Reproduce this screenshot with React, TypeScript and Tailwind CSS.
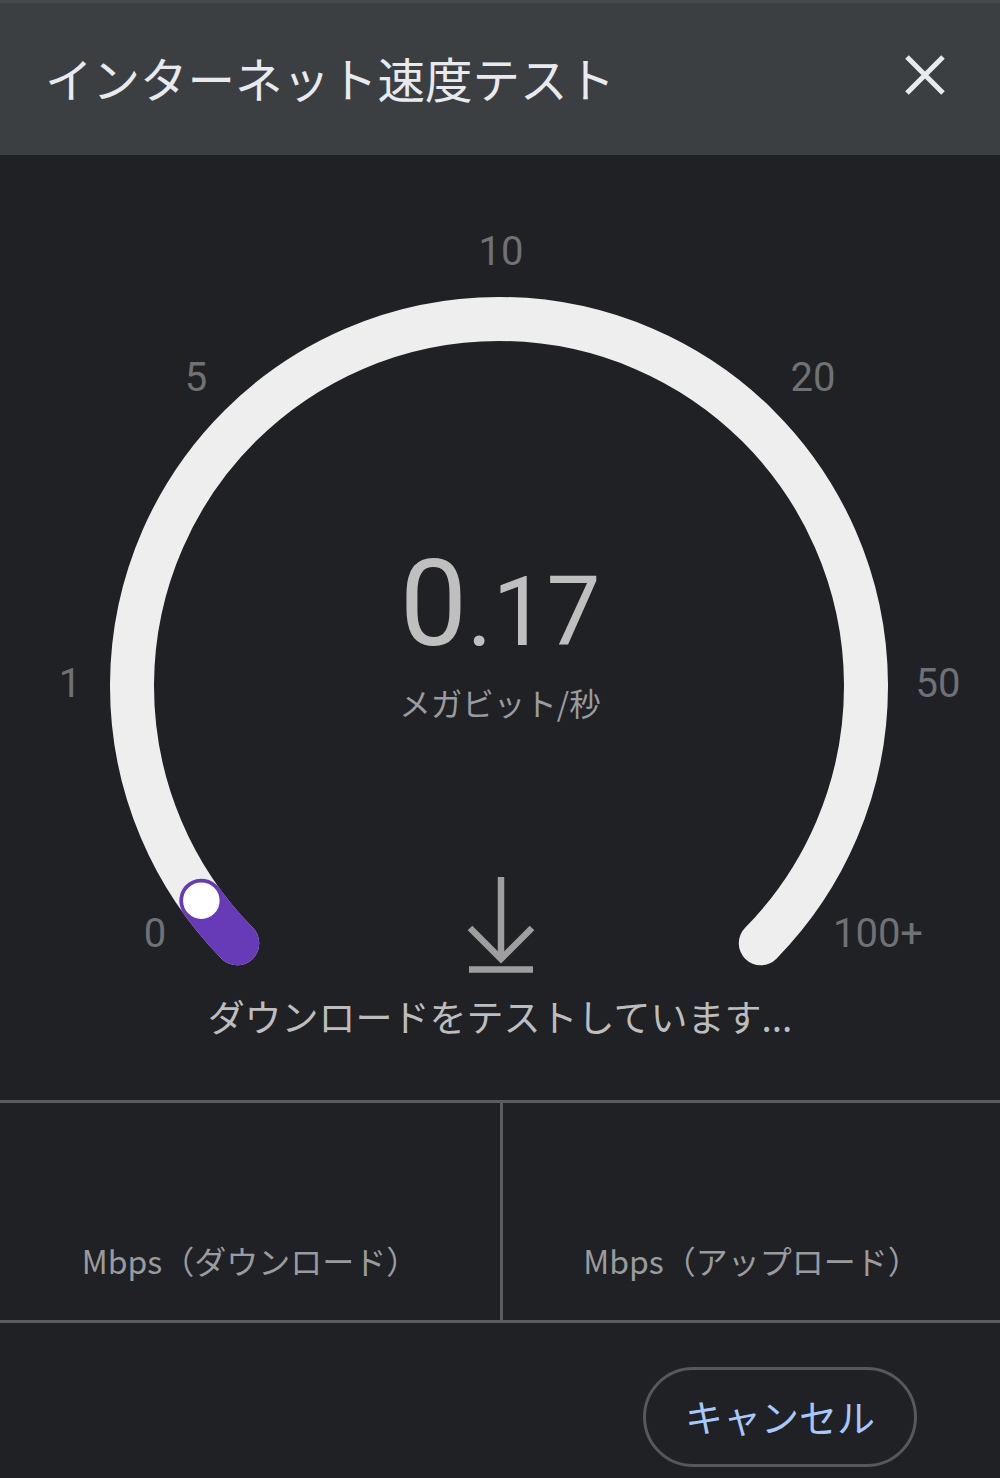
const jp = "font-['Noto_Sans_CJK_JP','Noto_Sans',sans-serif]";
const num = "font-['Roboto','Noto_Sans_CJK_JP',sans-serif]";

// gauge geometry (svg coords, gauge area starts at y=155 of page)
const CX = 499;
const CY = 531;
const R = 367;

function pt(deg: number) {
  const a = (deg * Math.PI) / 180;
  return { x: CX + R * Math.sin(a), y: CY - R * Math.cos(a) };
}

const START = -134.5;
const END = 134.5;
const VALUE = -125.8;

function Gauge() {
  const s = pt(START);
  const e = pt(END);
  const v = pt(VALUE);

  return (
    <svg viewBox="0 0 1000 945" className="absolute inset-0 h-full w-full">
      <path
        d={`M ${s.x} ${s.y} A ${R} ${R} 0 1 1 ${e.x} ${e.y}`}
        fill="none"
        stroke="#eeeeee"
        strokeWidth={44}
        strokeLinecap="round"
      />
      <path
        d={`M ${s.x} ${s.y} A ${R} ${R} 0 0 1 ${v.x} ${v.y}`}
        fill="none"
        stroke="#673ab7"
        strokeWidth={44}
        strokeLinecap="round"
      />
      <circle cx={v.x} cy={v.y} r={19.5} fill="#ffffff" stroke="#673ab7" strokeWidth={2.5} />

      {/* download arrow */}
      <g stroke="#9e9e9e" strokeWidth={6.5} fill="none">
        <line x1={501} y1={722} x2={501} y2={802} />
        <polyline points="470,773 501,804 532,773" />
        <line x1={469} y1={814.5} x2={533} y2={814.5} />
      </g>
    </svg>
  );
}

const ticks = [
  { label: "10", cls: "left-[501px] top-[97px]" },
  { label: "5", cls: "left-[196px] top-[223px]" },
  { label: "20", cls: "left-[813px] top-[223px]" },
  { label: "1", cls: "left-[70px] top-[529px]" },
  { label: "50", cls: "left-[938px] top-[529px]" },
  { label: "0", cls: "left-[155px] top-[779px]" },
  { label: "100+", cls: "left-[878px] top-[779px]" },
];

export default function App() {
  return (
    <div className={`flex h-[1478px] w-[1000px] flex-col overflow-hidden bg-[#202124] ${jp}`}>
      <header className="flex h-[155px] shrink-0 items-center justify-between border-t-[3px] border-[#46494c] bg-[#3c3f42] pb-[3px] pl-[45px] pr-[55px]">
        <h1 className="text-[47.5px] leading-[60px] text-[#e8eaed]">インターネット速度テスト</h1>
        <svg width="40" height="40" viewBox="0 0 40 40" className="mb-[5px]">
          <path d="M2 2 L38 38 M38 2 L2 38" stroke="#e8eaed" strokeWidth={5} />
        </svg>
      </header>

      <section className="relative h-[945px] shrink-0">
        <Gauge />
        {ticks.map((t) => (
          <span
            key={t.label}
            className={`absolute -translate-x-1/2 -translate-y-1/2 text-[40px] leading-none text-[#6f7175] ${num} ${t.cls}`}
          >
            {t.label}
          </span>
        ))}

        <div className={`absolute inset-x-0 top-[389px] flex items-baseline justify-center text-[120px] leading-none text-[#bfbfbf] ${num}`}>
          <span>0</span>
          <span className="text-[96px]">.17</span>
        </div>
        <div className="absolute inset-x-0 top-[527px] text-center text-[31.5px] leading-[40px] text-[#9a9b9e]">
          メガビット/秒
        </div>
        <div className="absolute inset-x-0 top-[837px] text-center text-[37px] leading-[48px] text-[#bdbdbd]">
          ダウンロードをテストしています...
        </div>
      </section>

      <section className="grid h-[223px] shrink-0 grid-cols-2 border-y-[3px] border-[#5a5c60]">
        <div className="pt-[138px] text-center text-[32px] leading-[38px] text-[#9a9b9e]">
          Mbps（ダウンロード）
        </div>
        <div className="border-l-[3px] border-[#5a5c60] pt-[138px] text-center text-[32px] leading-[38px] text-[#9a9b9e]">
          Mbps（アップロード）
        </div>
      </section>

      <footer className="flex flex-1 items-start justify-end pr-[83px] pt-[44px]">
        <button className="flex h-[100px] w-[274px] items-center justify-center rounded-full border-[3px] border-[#56585c] pb-[4px] text-[38px] text-[#a8c7fa]">
          キャンセル
        </button>
      </footer>
    </div>
  );
}
